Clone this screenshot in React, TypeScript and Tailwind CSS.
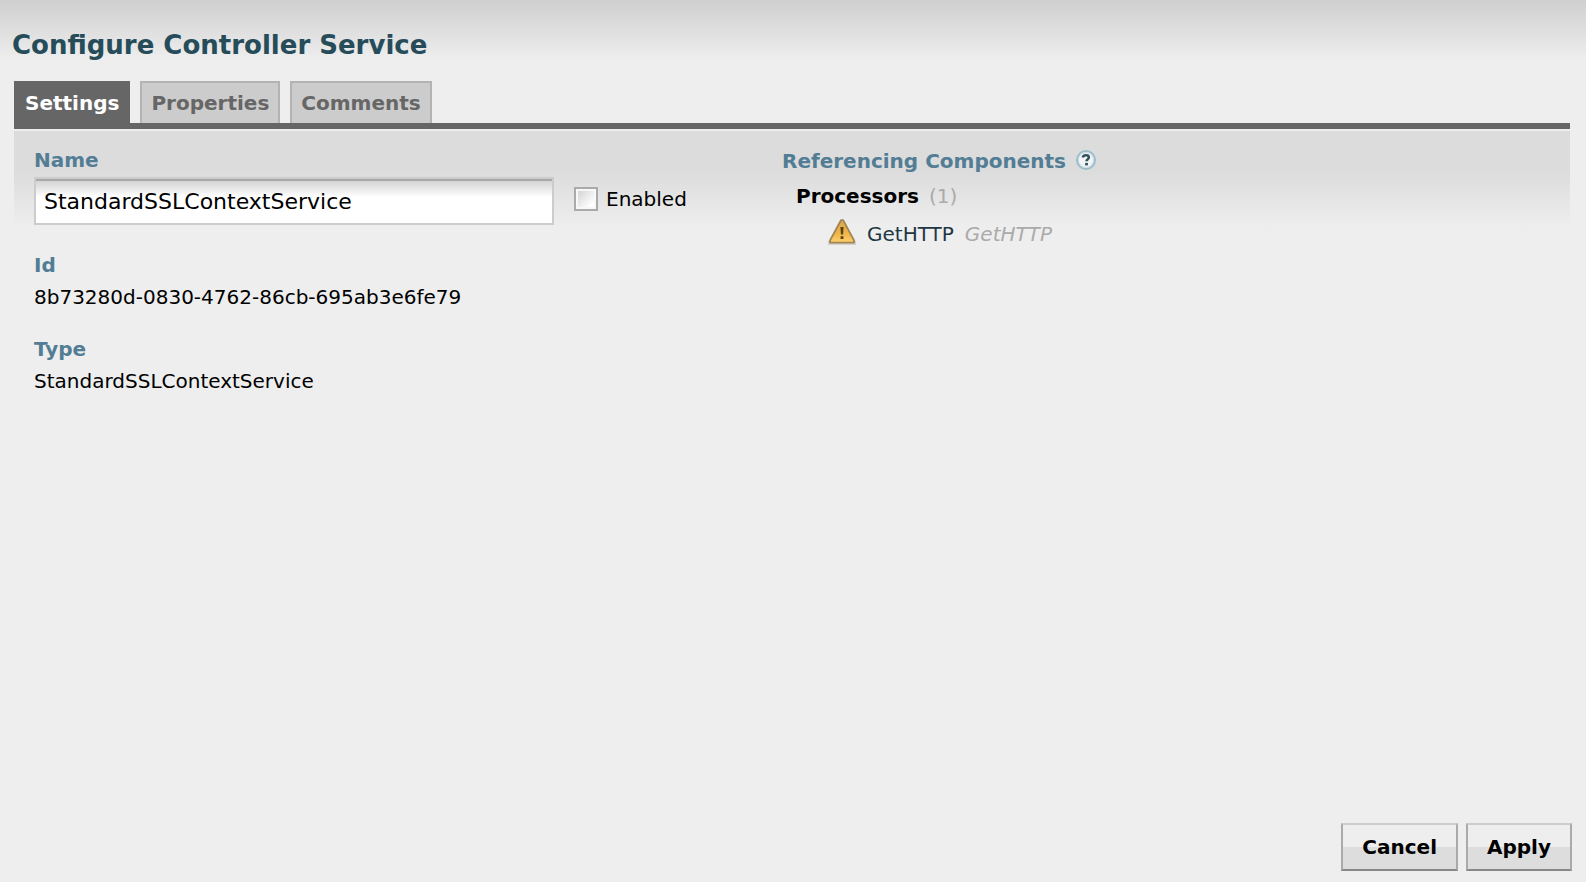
import { useState } from "react";

const tabs = ["Settings", "Properties", "Comments"];

function HelpIcon() {
  return (
    <svg width="20" height="20" viewBox="0 0 20 20" className="mb-0.5" aria-hidden="true">
      <circle cx="10" cy="10" r="9" fill="#eef2f4" stroke="#9dbdcc" strokeWidth="2" />
      <circle cx="10" cy="10" r="7.5" fill="#f2f5f6" stroke="#c9dbe4" strokeWidth="1" />
      <path d="M6.8 7.4C7.1 5.9 8.3 5.2 10 5.2c1.8 0 2.9.8 2.9 2.1 0 1.9-2.4 1.9-2.4 3.9" fill="none" stroke="#34515d" strokeWidth="2.5" />
      <rect x="9.1" y="12.9" width="2.8" height="2.5" fill="#34515d" />
    </svg>
  );
}

function WarningIcon() {
  return (
    <svg width="28" height="28" viewBox="0 0 28 28" className="mb-1" aria-hidden="true">
      <defs>
        <linearGradient id="warn" x1="0" y1="0" x2="0" y2="1">
          <stop offset="0" stopColor="#dba94a" />
          <stop offset="0.6" stopColor="#efb54a" />
          <stop offset="1" stopColor="#ffd06c" />
        </linearGradient>
      </defs>
      <rect x="0" y="23" width="28" height="4" fill="#b5b3ae" opacity="0.5" />
      <path d="M13 2.2h2.2L26 22.4v2.2H2v-2.2Z" fill="url(#warn)" stroke="#a08552" strokeWidth="1.8" strokeLinejoin="round" />
      <path d="M12.4 9h3.2l-.5 7.6h-2.2Z" fill="#5a430f" />
      <rect x="12.6" y="18.2" width="2.8" height="2.8" fill="#5a430f" />
    </svg>
  );
}

function Field({ label, value }: { label: string; value: string }) {
  return (
    <div>
      <dt className="font-bold leading-8 text-[#527d94]">{label}</dt>
      <dd className="leading-8">{value}</dd>
    </div>
  );
}

function ActionButton({ children }: { children: string }) {
  return (
    <button
      type="button"
      className="h-12 border-2 border-t-[#cccccc] border-r-[#aaaaaa] border-b-[#888888] border-l-[#aaaaaa] bg-linear-to-b from-[#eeeeee] from-50% to-[#dddddd] to-50% px-[19px] font-bold"
    >
      {children}
    </button>
  );
}

export default function App() {
  const [active, setActive] = useState("Settings");
  const [name, setName] = useState("StandardSSLContextService");
  const [enabled, setEnabled] = useState(false);

  return (
    <div className="flex min-h-screen flex-col bg-[#eeeeee] bg-[linear-gradient(to_bottom,#cfcfcf_0,#eeeeee_60px)] bg-no-repeat pr-4 pb-[11px] pl-3.5 font-['DejaVu_Sans',Verdana,sans-serif] text-[20px] text-black">
      <h1 className="-ml-0.5 pt-[25px] text-[26px] leading-10 font-bold text-[#264c5a]">Configure Controller Service</h1>

      <div role="tablist" className="mt-4 flex gap-2.5 border-b-[6px] border-[#666666]">
        {tabs.map((tab) => (
          <button
            key={tab}
            type="button"
            role="tab"
            aria-selected={active === tab}
            onClick={() => setActive(tab)}
            className={
              active === tab
                ? "h-[42px] border-2 border-b-0 border-[#666666] bg-[#666666] px-[9px] font-bold text-white"
                : "h-[42px] border-2 border-b-0 border-[#b3b3b3] bg-[#cccccc] px-[9px] font-bold text-[#666666]"
            }
          >
            {tab}
          </button>
        ))}
      </div>

      <main className="mt-0.5 grid flex-1 grid-cols-2 content-start bg-[linear-gradient(to_bottom,#dcdcdc_0,#dcdcdc_40px,#eeeeee_96px)] px-5 pt-3">
        <section>
          <label htmlFor="service-name" className="block leading-[34px] font-bold text-[#527d94]">
            Name
          </label>
          <div className="flex items-center gap-5">
            <input
              id="service-name"
              type="text"
              value={name}
              onChange={(event) => setName(event.target.value)}
              className="h-12 w-[520px] border-2 border-[#cccccc] bg-white bg-[linear-gradient(to_bottom,#a8a8a8_0,#a8a8a8_2px,#d4d4d4_2px,#ffffff_18px)] px-2 text-[22px] outline-none"
            />
            <label className="mb-1 flex items-center gap-2">
              <input
                type="checkbox"
                checked={enabled}
                onChange={(event) => setEnabled(event.target.checked)}
                className="size-6 appearance-none border-2 border-[#aaaaaa] bg-linear-to-br from-[#cfcfcf] to-white to-80% shadow-[inset_0_0_0_2px_#f8f8f8] checked:bg-[#527d94]"
              />
              Enabled
            </label>
          </div>
          <dl className="mt-6 flex flex-col gap-5">
            <Field label="Id" value="8b73280d-0830-4762-86cb-695ab3e6fe79" />
            <Field label="Type" value="StandardSSLContextService" />
          </dl>
        </section>

        <section className="-ml-2.5 pt-px">
          <h2 className="flex items-center gap-2.5 leading-[34px] font-bold text-[#527d94]">
            Referencing Components
            <HelpIcon />
          </h2>
          <div className="pl-3.5">
            <h3 className="flex gap-2.5 leading-9 font-bold">
              Processors <span className="font-normal text-[#aaaaaa]">(1)</span>
            </h3>
            <ul className="pl-8">
              <li className="flex items-center gap-[11px] leading-10">
                <WarningIcon />
                <a href="#gethttp" className="text-[#1f3742]">GetHTTP</a>
                <em className="text-[#aaaaaa]">GetHTTP</em>
              </li>
            </ul>
          </div>
        </section>
      </main>

      <footer className="-mr-0.5 flex justify-end gap-2">
        <ActionButton>Cancel</ActionButton>
        <ActionButton>Apply</ActionButton>
      </footer>
    </div>
  );
}
